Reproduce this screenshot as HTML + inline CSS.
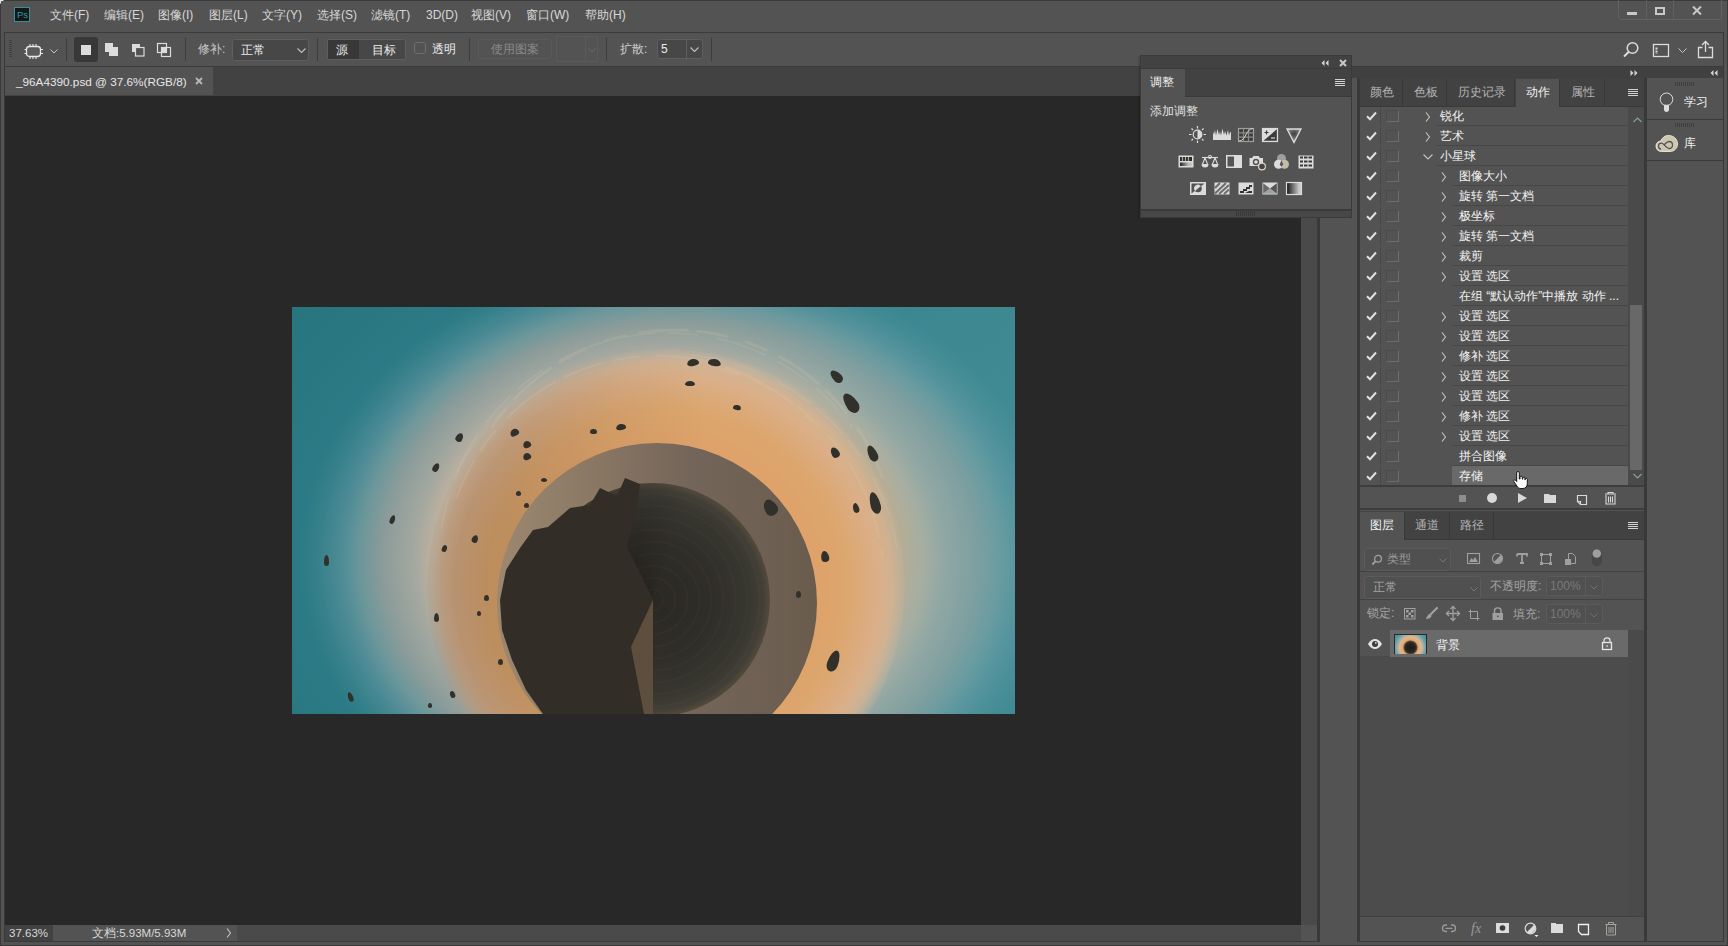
<!DOCTYPE html>
<html><head><meta charset="utf-8">
<style>
*{margin:0;padding:0;box-sizing:border-box}
html,body{width:1728px;height:946px;overflow:hidden;background:#535353;font-family:"Liberation Sans",sans-serif;color:#d8d8d8;font-size:12px}
.a{position:absolute}
.t{position:absolute;white-space:nowrap;line-height:14px}
.ln{position:absolute;background:#393939}
.rk i{position:absolute;display:block;background:#32302b;border-radius:50% 50% 50% 50% / 65% 65% 35% 35%}
</style></head><body>
<!-- window border -->
<div class="a" style="left:0;top:0;width:1728px;height:946px;border:1px solid #3a3a3a"></div>

<!-- MENU BAR -->
<svg class="a" style="left:0;top:0" width="4" height="4"><path d="M0 0H3.5V1H1V3.5H0Z" fill="#e8e8e8"/></svg>
<div class="a" style="left:14px;top:7px;width:16px;height:15px;background:#141816;border:1px solid #3a8e9a"></div>
<div class="t" style="left:17px;top:8px;font-size:9.5px;color:#3796a6;letter-spacing:0px">Ps</div>
<div class="t" style="left:50px;top:8px">文件(F)</div>
<div class="t" style="left:104px;top:8px">编辑(E)</div>
<div class="t" style="left:158px;top:8px">图像(I)</div>
<div class="t" style="left:209px;top:8px">图层(L)</div>
<div class="t" style="left:262px;top:8px">文字(Y)</div>
<div class="t" style="left:317px;top:8px">选择(S)</div>
<div class="t" style="left:371px;top:8px">滤镜(T)</div>
<div class="t" style="left:426px;top:8px">3D(D)</div>
<div class="t" style="left:471px;top:8px">视图(V)</div>
<div class="t" style="left:526px;top:8px">窗口(W)</div>
<div class="t" style="left:585px;top:8px">帮助(H)</div>

<!-- window controls -->
<div class="a" style="left:1618px;top:-3px;width:104px;height:23px;border:1px solid #616161;border-radius:3px"></div>
<div class="ln" style="left:1646px;top:0;width:1px;height:19px;background:#5f5f5f"></div>
<div class="ln" style="left:1673px;top:0;width:1px;height:19px;background:#5f5f5f"></div>
<div class="a" style="left:1627px;top:12px;width:10px;height:3px;background:#c8c8c8"></div>
<div class="a" style="left:1655px;top:7px;width:10px;height:8px;border:2px solid #c8c8c8"></div>
<svg class="a" style="left:1692px;top:6px" width="10" height="9" viewBox="0 0 10 9"><path d="M1 0.5L9 8.5M9 0.5L1 8.5" stroke="#c8c8c8" stroke-width="2"/></svg>

<!-- OPTIONS BAR -->
<div class="a" style="left:4px;top:32px;width:1720px;height:35px;border-top:1px solid #3b3b3b;border-left:1px solid #3b3b3b;border-right:1px solid #3b3b3b;border-bottom:1px solid #3b3b3b"></div>

<!-- options bar contents -->
<div class="a" style="left:9px;top:40px;width:3px;height:18px;background:repeating-linear-gradient(180deg,#404040 0 1px,transparent 1px 2px)"></div>
<svg class="a" style="left:24px;top:43px" width="20" height="17" viewBox="0 0 20 17"><rect x="2.5" y="3.5" width="14" height="10" rx="3" fill="#5a5a5a" stroke="#e8e8e8" stroke-width="1.3"/><path d="M6 1V4M9 1V4M12 1V4M6 13V16M9 13V16M12 13V16M0.5 6.5H3M0.5 10.5H3M16 6.5H19M16 10.5H19" stroke="#e8e8e8" stroke-width="1.1"/></svg>
<svg class="a" style="left:50px;top:49px" width="8" height="5"><path d="M0.5 0.5L4 4L7.5 0.5" stroke="#c8c4b8" stroke-width="1" fill="none"/></svg>
<div class="ln" style="left:66px;top:38px;width:1px;height:23px;background:#3d3d3d"></div>
<div class="a" style="left:74px;top:37px;width:24px;height:25px;background:#383838;border-radius:3px"></div>
<div class="a" style="left:81px;top:45px;width:10px;height:10px;background:#dcdcdc"></div>
<svg class="a" style="left:104px;top:42px" width="16" height="16"><path d="M1 1H9V5H14V14H5V10H1Z" fill="#dcdcdc"/></svg>
<svg class="a" style="left:131px;top:43px" width="15" height="15"><rect x="1" y="1" width="8" height="8" fill="#dcdcdc"/><rect x="4.5" y="4.5" width="8.5" height="8.5" fill="#535353" stroke="#dcdcdc" stroke-width="1.2"/></svg>
<svg class="a" style="left:156px;top:42px" width="16" height="16"><rect x="1.5" y="1.5" width="9" height="9" fill="none" stroke="#dcdcdc" stroke-width="1.2"/><rect x="5.5" y="5.5" width="9" height="9" fill="none" stroke="#dcdcdc" stroke-width="1.2"/><rect x="5.5" y="5.5" width="5" height="5" fill="#dcdcdc"/></svg>
<div class="ln" style="left:185px;top:38px;width:1px;height:23px;background:#3d3d3d"></div>
<div class="t" style="left:198px;top:42px;color:#c8c8c8">修补:</div>
<div class="a" style="left:232px;top:39px;width:77px;height:22px;background:#474747;border:1px solid #5e5e5e;border-radius:3px"></div>
<div class="t" style="left:241px;top:43px;color:#ececec">正常</div>
<svg class="a" style="left:297px;top:48px" width="9" height="6"><path d="M0.5 0.5L4.5 4.5L8.5 0.5" stroke="#c0c0c0" stroke-width="1.1" fill="none"/></svg>
<div class="ln" style="left:317px;top:38px;width:1px;height:23px;background:#3d3d3d"></div>
<div class="a" style="left:327px;top:39px;width:79px;height:21px;background:#474747;border:1px solid #5e5e5e;border-radius:2px"></div>
<div class="a" style="left:328px;top:40px;width:31px;height:19px;background:#383838"></div>
<div class="t" style="left:336px;top:43px;color:#ececec">源</div>
<div class="t" style="left:372px;top:43px;color:#ececec">目标</div>
<div class="a" style="left:414px;top:42px;width:12px;height:12px;border:1px solid #6b6f6f;border-radius:3px"></div>
<div class="t" style="left:432px;top:42px;color:#ececec">透明</div>
<div class="ln" style="left:469px;top:38px;width:1px;height:23px;background:#3d3d3d"></div>
<div class="a" style="left:478px;top:39px;width:74px;height:20px;border:1px solid #5a5a5a;border-radius:3px"></div>
<div class="t" style="left:491px;top:42px;color:#8a8a8a">使用图案</div>
<div class="a" style="left:556px;top:36px;width:42px;height:26px;border:1px solid #5a5a5a;background:#535353"></div>
<div class="ln" style="left:585px;top:37px;width:1px;height:24px;background:#5a5a5a"></div>
<svg class="a" style="left:588px;top:48px" width="8" height="5"><path d="M0.5 0.5L4 4L7.5 0.5" stroke="#6a6a6a" stroke-width="1" fill="none"/></svg>
<div class="ln" style="left:606px;top:38px;width:1px;height:23px;background:#3d3d3d"></div>
<div class="t" style="left:620px;top:42px;color:#d0d0d0">扩散:</div>
<div class="a" style="left:657px;top:39px;width:46px;height:20px;background:#474747;border:1px solid #5e5e5e;border-radius:3px"></div>
<div class="ln" style="left:686px;top:40px;width:1px;height:18px;background:#5e5e5e"></div>
<div class="t" style="left:661px;top:42px;color:#ececec">5</div>
<svg class="a" style="left:690px;top:47px" width="9" height="6"><path d="M0.5 0.5L4.5 4.5L8.5 0.5" stroke="#c0c0c0" stroke-width="1.1" fill="none"/></svg>
<div class="ln" style="left:711px;top:38px;width:1px;height:23px;background:#3d3d3d"></div>
<!-- right icons -->
<svg class="a" style="left:1622px;top:41px" width="18" height="18"><circle cx="10.5" cy="7" r="5.3" fill="none" stroke="#dcdcdc" stroke-width="1.5"/><path d="M6.8 10.8L2 15.5" stroke="#dcdcdc" stroke-width="2"/></svg>
<svg class="a" style="left:1652px;top:43px" width="18" height="16"><rect x="1.5" y="1.5" width="15" height="12" fill="none" stroke="#dcdcdc" stroke-width="1.3"/><path d="M4.5 4.5V11" stroke="#dcdcdc" stroke-width="2" stroke-dasharray="2 1"/></svg>
<svg class="a" style="left:1678px;top:48px" width="9" height="6"><path d="M0.5 0.5L4.5 4.5L8.5 0.5" stroke="#c8c4b8" stroke-width="1" fill="none"/></svg>
<svg class="a" style="left:1697px;top:40px" width="18" height="19"><path d="M5.5 7.5H1.5V17.5H15.5V7.5H11.5M8.5 12V1.5M5 5L8.5 1.5L12 5" fill="none" stroke="#dcdcdc" stroke-width="1.3"/></svg>

<!-- DOC TAB BAR -->
<div class="a" style="left:5px;top:67px;width:1296px;height:29px;background:#424242"></div>
<div class="a" style="left:5px;top:67px;width:208px;height:28px;background:#535353"></div>
<div class="t" style="left:16px;top:75px;font-size:11.75px;color:#e6e6e6">_96A4390.psd @ 37.6%(RGB/8)</div>
<svg class="a" style="left:195px;top:77px" width="8" height="8"><path d="M1 1L7 7M7 1L1 7" stroke="#b8b8b0" stroke-width="1.8"/></svg>

<!-- CANVAS -->
<div class="a" style="left:5px;top:96px;width:1296px;height:829px;background:#282828"></div>
<div id="photo" class="a" style="left:292px;top:307px;width:723px;height:407px;overflow:hidden;background:#27757d">
<div class="a" style="left:0;top:0;width:723px;height:407px;background:radial-gradient(380px 305px at 388px 253px,#e0a46c 0%,#e0a46c 45%,#daa874 52%,#d8b08a 58%,#c2b29e 64%,#a4a8a0 70%,#8c9c9a 78%,#6c979b 84%,#4f8c96 89%,#37818b 95%,#2b7a85 100%,#27757d 130%)"></div>
<div class="a" style="left:0;top:0;width:723px;height:407px;background:linear-gradient(90deg,rgba(100,165,172,0) 380px,rgba(100,165,172,0.25) 560px,rgba(100,165,172,0.38) 723px)"></div>
<div class="a" style="left:135px;top:42px;width:478px;height:478px;border-radius:50%;background:linear-gradient(90deg,#d2d2d2 0px,#dcdcdc 80px,#f4f4f4 200px,#ffffff 280px),radial-gradient(circle at 50% 50%,#dea26a 0px,#dea26a 150px,#dca66e 180px,#dbae86 210px,#d8b492 228px,#ccb8a2 239px);background-blend-mode:multiply;-webkit-mask-image:radial-gradient(circle at 50% 50%,#000 212px,rgba(0,0,0,0.75) 226px,rgba(0,0,0,0.3) 236px,transparent 243px)"></div>
<svg class="a" style="left:0;top:0;opacity:0.14" width="723" height="407"><g fill="none" stroke="#f0d2ae" stroke-linecap="round">
<path d="M165 190A213 213 0 0 1 520 115" stroke-width="2" stroke-dasharray="40 12 25 18 60 10"/>
<path d="M150 220A228 228 0 0 1 560 120" stroke-width="1.5" stroke-dasharray="30 20 50 15 35 12"/>
<path d="M200 120A220 220 0 0 1 590 170" stroke-width="2.5" stroke-dasharray="22 14 48 10 30 20"/>
<path d="M400 48A234 234 0 0 1 605 240" stroke-width="1.5" stroke-dasharray="35 10 20 25 40 8"/>
<path d="M430 62A220 220 0 0 1 590 250" stroke-width="2" stroke-dasharray="18 16 40 12 28 14"/>
</g></svg>
<div class="a" style="left:205px;top:136px;width:320px;height:320px;border-radius:50%;background:linear-gradient(90deg,#9c8870 0%,#8a7864 30%,#74655a 60%,#6a5c4d 100%)"></div>
<div class="a" style="left:244px;top:176px;width:234px;height:234px;border-radius:50%;background:radial-gradient(circle at 50% 50%,#2a2823 0px,#302e28 60px,#37362f 95px,#413f37 110px,#554a3b 117px)"></div>
<div class="a" style="left:244px;top:176px;width:234px;height:234px;border-radius:50%;background:repeating-radial-gradient(circle at 50% 50%,rgba(150,110,70,0) 0px,rgba(150,110,70,0) 9px,rgba(160,120,80,0.06) 10px,rgba(150,110,70,0) 12px)"></div>
<div class="a" style="left:244px;top:176px;width:234px;height:234px;border-radius:50%;background:conic-gradient(from 180deg at 50% 50%,rgba(20,18,15,0.25) 0deg,rgba(20,18,15,0.3) 150deg,rgba(20,18,15,0) 200deg,rgba(20,18,15,0) 360deg)"></div>
<svg class="a" style="left:0;top:0" width="723" height="407"><path d="M348 177L333 171L325 189L308 181L298 198L278 201L256 220L241 223L228 241L214 263L208 293L210 323L220 353L234 383L251 407L361 407L361 292L335 240L345 200Z" fill="#322e27"/><path d="M361 293L339 340L352 407L361 407Z" fill="#6e5a45" opacity="0.75"/></svg>
<div class="rk">
<i style="left:395px;top:52px;width:12px;height:7px;transform:rotate(-10deg)"></i>
<i style="left:416px;top:52px;width:13px;height:7px;transform:rotate(10deg)"></i>
<i style="left:393px;top:74px;width:10px;height:5px;transform:rotate(0deg)"></i>
<i style="left:441px;top:98px;width:8px;height:5px;transform:rotate(10deg)"></i>
<i style="left:324px;top:117px;width:10px;height:6px;transform:rotate(-10deg)"></i>
<i style="left:218px;top:122px;width:9px;height:7px;transform:rotate(-30deg)"></i>
<i style="left:298px;top:122px;width:7px;height:5px;transform:rotate(0deg)"></i>
<i style="left:164px;top:126px;width:7px;height:9px;transform:rotate(30deg)"></i>
<i style="left:231px;top:134px;width:8px;height:7px;transform:rotate(-20deg)"></i>
<i style="left:231px;top:146px;width:8px;height:7px;transform:rotate(-20deg)"></i>
<i style="left:141px;top:156px;width:6px;height:9px;transform:rotate(30deg)"></i>
<i style="left:249px;top:171px;width:6px;height:4px;transform:rotate(0deg)"></i>
<i style="left:224px;top:184px;width:5px;height:5px;transform:rotate(0deg)"></i>
<i style="left:232px;top:196px;width:5px;height:5px;transform:rotate(0deg)"></i>
<i style="left:98px;top:208px;width:5px;height:9px;transform:rotate(20deg)"></i>
<i style="left:180px;top:228px;width:6px;height:8px;transform:rotate(20deg)"></i>
<i style="left:150px;top:238px;width:5px;height:7px;transform:rotate(20deg)"></i>
<i style="left:32px;top:248px;width:5px;height:11px;transform:rotate(0deg)"></i>
<i style="left:192px;top:288px;width:5px;height:6px;transform:rotate(0deg)"></i>
<i style="left:142px;top:306px;width:5px;height:9px;transform:rotate(0deg)"></i>
<i style="left:185px;top:304px;width:4px;height:5px;transform:rotate(0deg)"></i>
<i style="left:212px;top:326px;width:4px;height:5px;transform:rotate(0deg)"></i>
<i style="left:206px;top:352px;width:5px;height:6px;transform:rotate(0deg)"></i>
<i style="left:158px;top:384px;width:5px;height:7px;transform:rotate(-20deg)"></i>
<i style="left:136px;top:396px;width:4px;height:5px;transform:rotate(0deg)"></i>
<i style="left:56px;top:385px;width:5px;height:10px;transform:rotate(-20deg)"></i>
<i style="left:540px;top:62px;width:9px;height:15px;transform:rotate(-45deg)"></i>
<i style="left:553px;top:85px;width:12px;height:22px;transform:rotate(-35deg)"></i>
<i style="left:539px;top:140px;width:8px;height:11px;transform:rotate(-30deg)"></i>
<i style="left:576px;top:138px;width:9px;height:17px;transform:rotate(-25deg)"></i>
<i style="left:561px;top:196px;width:6px;height:10px;transform:rotate(-15deg)"></i>
<i style="left:578px;top:185px;width:10px;height:22px;transform:rotate(-15deg)"></i>
<i style="left:472px;top:192px;width:13px;height:17px;transform:rotate(-30deg)"></i>
<i style="left:529px;top:244px;width:8px;height:11px;transform:rotate(-10deg)"></i>
<i style="left:536px;top:343px;width:11px;height:22px;transform:rotate(20deg)"></i>
<i style="left:504px;top:284px;width:5px;height:7px;transform:rotate(0deg)"></i>
</div>
</div>

<!-- vertical scrollbar -->
<div class="a" style="left:1301px;top:96px;width:16px;height:829px;background:#4a4a4a"></div>
<!-- status bar -->
<div class="a" style="left:5px;top:925px;width:48px;height:16px;background:#424242"></div>
<div class="a" style="left:53px;top:925px;width:184px;height:16px;background:#535353"></div>
<div class="a" style="left:237px;top:925px;width:1064px;height:16px;background:#4a4a4a"></div>
<div class="t" style="left:9px;top:926px;font-size:11.5px">37.63%</div>
<div class="t" style="left:92px;top:926px;font-size:11.5px">文档:5.93M/5.93M</div>
<svg class="a" style="left:226px;top:928px" width="6" height="10"><path d="M1 0.5L4.5 5L1 9.5" stroke="#c8c6bc" stroke-width="1.1" fill="none"/></svg>
<div class="ln" style="left:4px;top:66px;width:1px;height:876px"></div>
<div class="ln" style="left:4px;top:941px;width:1316px;height:1px"></div>

<!-- dock separators -->
<div class="ln" style="left:1317px;top:66px;width:3px;height:876px"></div>
<div class="a" style="left:1320px;top:67px;width:403px;height:11px;background:#404040"></div>
<div class="ln" style="left:1357px;top:78px;width:3px;height:864px"></div>

<!-- ACTIONS PANEL -->
<div id="actions" class="a" style="left:1360px;top:78px;width:284px;height:432px;background:#535353"></div>
<div class="a" style="left:1360px;top:78px;width:284px;height:28px;background:#424242"></div>
<div class="a" style="left:1360px;top:79px;width:43px;height:27px;background:#424242;border-right:1px solid #383838"></div>
<div class="t" style="left:1360px;top:85px;width:43px;text-align:center;color:#b4b4b4">颜色</div>
<div class="a" style="left:1404px;top:79px;width:43px;height:27px;background:#424242;border-right:1px solid #383838"></div>
<div class="t" style="left:1404px;top:85px;width:43px;text-align:center;color:#b4b4b4">色板</div>
<div class="a" style="left:1448px;top:79px;width:67px;height:27px;background:#424242;border-right:1px solid #383838"></div>
<div class="t" style="left:1448px;top:85px;width:67px;text-align:center;color:#b4b4b4">历史记录</div>
<div class="a" style="left:1516px;top:79px;width:44px;height:28px;background:#535353;border-right:1px solid #383838"></div>
<div class="t" style="left:1516px;top:85px;width:44px;text-align:center;color:#f2f2f2">动作</div>
<div class="a" style="left:1561px;top:79px;width:44px;height:27px;background:#424242;border-right:1px solid #383838"></div>
<div class="t" style="left:1561px;top:85px;width:44px;text-align:center;color:#b4b4b4">属性</div>
<div class="ln" style="left:1360px;top:106px;width:156px;height:1px"></div>
<div class="ln" style="left:1560px;top:106px;width:84px;height:1px"></div>
<svg class="a" style="left:1628px;top:89px" width="11" height="8"><path d="M0 0H10V1H0ZM0 2H10V3H0ZM0 4H10V5H0ZM0 6H10V7H0Z" fill="#d2d2d2"/></svg>
<div class="a" style="left:1628px;top:107px;width:16px;height:379px;background:#4a4a4a"></div>
<svg class="a" style="left:1633px;top:117px" width="9" height="6"><path d="M0.5 5L4.5 1L8.5 5" stroke="#8a9c9c" stroke-width="1.2" fill="none"/></svg>
<div class="a" style="left:1630px;top:305px;width:12px;height:165px;background:#686868"></div>
<svg class="a" style="left:1633px;top:473px" width="9" height="6"><path d="M0.5 1L4.5 5L8.5 1" stroke="#8a9c9c" stroke-width="1.2" fill="none"/></svg>
<svg class="a" style="left:1366px;top:111px" width="11" height="10"><path d="M1 5.2L4 8.2L10 1.5" stroke="#e2e0d8" stroke-width="2" fill="none"/></svg>
<div class="a" style="left:1380px;top:107px;width:1px;height:18px;background:#484848"></div>
<div class="a" style="left:1386px;top:110px;width:13px;height:12px;border-right:1px solid #6c6c6c;border-bottom:1px solid #6c6c6c;border-top:1px solid #4b4b4b;border-left:1px solid #4b4b4b"></div>
<svg class="a" style="left:1425px;top:112px" width="6" height="10"><path d="M1 0.5L4.5 5L1 9.5" stroke="#c8c6bc" stroke-width="1.1" fill="none"/></svg>
<div class="t" style="left:1440px;top:109px;color:#f4f4f4">锐化</div>
<div class="a" style="left:1436px;top:125px;width:192px;height:1px;background:#474747"></div>
<svg class="a" style="left:1366px;top:131px" width="11" height="10"><path d="M1 5.2L4 8.2L10 1.5" stroke="#e2e0d8" stroke-width="2" fill="none"/></svg>
<div class="a" style="left:1380px;top:127px;width:1px;height:18px;background:#484848"></div>
<div class="a" style="left:1386px;top:130px;width:13px;height:12px;border-right:1px solid #6c6c6c;border-bottom:1px solid #6c6c6c;border-top:1px solid #4b4b4b;border-left:1px solid #4b4b4b"></div>
<svg class="a" style="left:1425px;top:132px" width="6" height="10"><path d="M1 0.5L4.5 5L1 9.5" stroke="#c8c6bc" stroke-width="1.1" fill="none"/></svg>
<div class="t" style="left:1440px;top:129px;color:#f4f4f4">艺术</div>
<div class="a" style="left:1436px;top:145px;width:192px;height:1px;background:#474747"></div>
<svg class="a" style="left:1366px;top:151px" width="11" height="10"><path d="M1 5.2L4 8.2L10 1.5" stroke="#e2e0d8" stroke-width="2" fill="none"/></svg>
<div class="a" style="left:1380px;top:147px;width:1px;height:18px;background:#484848"></div>
<div class="a" style="left:1386px;top:150px;width:13px;height:12px;border-right:1px solid #6c6c6c;border-bottom:1px solid #6c6c6c;border-top:1px solid #4b4b4b;border-left:1px solid #4b4b4b"></div>
<svg class="a" style="left:1423px;top:154px" width="10" height="6"><path d="M0.5 0.5L5 5L9.5 0.5" stroke="#c8c6bc" stroke-width="1.1" fill="none"/></svg>
<div class="t" style="left:1440px;top:149px;color:#f4f4f4">小星球</div>
<div class="a" style="left:1436px;top:165px;width:192px;height:1px;background:#474747"></div>
<svg class="a" style="left:1366px;top:171px" width="11" height="10"><path d="M1 5.2L4 8.2L10 1.5" stroke="#e2e0d8" stroke-width="2" fill="none"/></svg>
<div class="a" style="left:1380px;top:167px;width:1px;height:18px;background:#484848"></div>
<div class="a" style="left:1386px;top:170px;width:13px;height:12px;border-right:1px solid #6c6c6c;border-bottom:1px solid #6c6c6c;border-top:1px solid #4b4b4b;border-left:1px solid #4b4b4b"></div>
<svg class="a" style="left:1441px;top:172px" width="6" height="10"><path d="M1 0.5L4.5 5L1 9.5" stroke="#c8c6bc" stroke-width="1.1" fill="none"/></svg>
<div class="t" style="left:1459px;top:169px;color:#f4f4f4">图像大小</div>
<div class="a" style="left:1452px;top:185px;width:176px;height:1px;background:#474747"></div>
<svg class="a" style="left:1366px;top:191px" width="11" height="10"><path d="M1 5.2L4 8.2L10 1.5" stroke="#e2e0d8" stroke-width="2" fill="none"/></svg>
<div class="a" style="left:1380px;top:187px;width:1px;height:18px;background:#484848"></div>
<div class="a" style="left:1386px;top:190px;width:13px;height:12px;border-right:1px solid #6c6c6c;border-bottom:1px solid #6c6c6c;border-top:1px solid #4b4b4b;border-left:1px solid #4b4b4b"></div>
<svg class="a" style="left:1441px;top:192px" width="6" height="10"><path d="M1 0.5L4.5 5L1 9.5" stroke="#c8c6bc" stroke-width="1.1" fill="none"/></svg>
<div class="t" style="left:1459px;top:189px;color:#f4f4f4">旋转 第一文档</div>
<div class="a" style="left:1452px;top:205px;width:176px;height:1px;background:#474747"></div>
<svg class="a" style="left:1366px;top:211px" width="11" height="10"><path d="M1 5.2L4 8.2L10 1.5" stroke="#e2e0d8" stroke-width="2" fill="none"/></svg>
<div class="a" style="left:1380px;top:207px;width:1px;height:18px;background:#484848"></div>
<div class="a" style="left:1386px;top:210px;width:13px;height:12px;border-right:1px solid #6c6c6c;border-bottom:1px solid #6c6c6c;border-top:1px solid #4b4b4b;border-left:1px solid #4b4b4b"></div>
<svg class="a" style="left:1441px;top:212px" width="6" height="10"><path d="M1 0.5L4.5 5L1 9.5" stroke="#c8c6bc" stroke-width="1.1" fill="none"/></svg>
<div class="t" style="left:1459px;top:209px;color:#f4f4f4">极坐标</div>
<div class="a" style="left:1452px;top:225px;width:176px;height:1px;background:#474747"></div>
<svg class="a" style="left:1366px;top:231px" width="11" height="10"><path d="M1 5.2L4 8.2L10 1.5" stroke="#e2e0d8" stroke-width="2" fill="none"/></svg>
<div class="a" style="left:1380px;top:227px;width:1px;height:18px;background:#484848"></div>
<div class="a" style="left:1386px;top:230px;width:13px;height:12px;border-right:1px solid #6c6c6c;border-bottom:1px solid #6c6c6c;border-top:1px solid #4b4b4b;border-left:1px solid #4b4b4b"></div>
<svg class="a" style="left:1441px;top:232px" width="6" height="10"><path d="M1 0.5L4.5 5L1 9.5" stroke="#c8c6bc" stroke-width="1.1" fill="none"/></svg>
<div class="t" style="left:1459px;top:229px;color:#f4f4f4">旋转 第一文档</div>
<div class="a" style="left:1452px;top:245px;width:176px;height:1px;background:#474747"></div>
<svg class="a" style="left:1366px;top:251px" width="11" height="10"><path d="M1 5.2L4 8.2L10 1.5" stroke="#e2e0d8" stroke-width="2" fill="none"/></svg>
<div class="a" style="left:1380px;top:247px;width:1px;height:18px;background:#484848"></div>
<div class="a" style="left:1386px;top:250px;width:13px;height:12px;border-right:1px solid #6c6c6c;border-bottom:1px solid #6c6c6c;border-top:1px solid #4b4b4b;border-left:1px solid #4b4b4b"></div>
<svg class="a" style="left:1441px;top:252px" width="6" height="10"><path d="M1 0.5L4.5 5L1 9.5" stroke="#c8c6bc" stroke-width="1.1" fill="none"/></svg>
<div class="t" style="left:1459px;top:249px;color:#f4f4f4">裁剪</div>
<div class="a" style="left:1452px;top:265px;width:176px;height:1px;background:#474747"></div>
<svg class="a" style="left:1366px;top:271px" width="11" height="10"><path d="M1 5.2L4 8.2L10 1.5" stroke="#e2e0d8" stroke-width="2" fill="none"/></svg>
<div class="a" style="left:1380px;top:267px;width:1px;height:18px;background:#484848"></div>
<div class="a" style="left:1386px;top:270px;width:13px;height:12px;border-right:1px solid #6c6c6c;border-bottom:1px solid #6c6c6c;border-top:1px solid #4b4b4b;border-left:1px solid #4b4b4b"></div>
<svg class="a" style="left:1441px;top:272px" width="6" height="10"><path d="M1 0.5L4.5 5L1 9.5" stroke="#c8c6bc" stroke-width="1.1" fill="none"/></svg>
<div class="t" style="left:1459px;top:269px;color:#f4f4f4">设置 选区</div>
<div class="a" style="left:1452px;top:285px;width:176px;height:1px;background:#474747"></div>
<svg class="a" style="left:1366px;top:291px" width="11" height="10"><path d="M1 5.2L4 8.2L10 1.5" stroke="#e2e0d8" stroke-width="2" fill="none"/></svg>
<div class="a" style="left:1380px;top:287px;width:1px;height:18px;background:#484848"></div>
<div class="a" style="left:1386px;top:290px;width:13px;height:12px;border-right:1px solid #6c6c6c;border-bottom:1px solid #6c6c6c;border-top:1px solid #4b4b4b;border-left:1px solid #4b4b4b"></div>
<div class="t" style="left:1459px;top:289px;color:#f4f4f4">在组 “默认动作”中播放 动作 ...</div>
<div class="a" style="left:1452px;top:305px;width:176px;height:1px;background:#474747"></div>
<svg class="a" style="left:1366px;top:311px" width="11" height="10"><path d="M1 5.2L4 8.2L10 1.5" stroke="#e2e0d8" stroke-width="2" fill="none"/></svg>
<div class="a" style="left:1380px;top:307px;width:1px;height:18px;background:#484848"></div>
<div class="a" style="left:1386px;top:310px;width:13px;height:12px;border-right:1px solid #6c6c6c;border-bottom:1px solid #6c6c6c;border-top:1px solid #4b4b4b;border-left:1px solid #4b4b4b"></div>
<svg class="a" style="left:1441px;top:312px" width="6" height="10"><path d="M1 0.5L4.5 5L1 9.5" stroke="#c8c6bc" stroke-width="1.1" fill="none"/></svg>
<div class="t" style="left:1459px;top:309px;color:#f4f4f4">设置 选区</div>
<div class="a" style="left:1452px;top:325px;width:176px;height:1px;background:#474747"></div>
<svg class="a" style="left:1366px;top:331px" width="11" height="10"><path d="M1 5.2L4 8.2L10 1.5" stroke="#e2e0d8" stroke-width="2" fill="none"/></svg>
<div class="a" style="left:1380px;top:327px;width:1px;height:18px;background:#484848"></div>
<div class="a" style="left:1386px;top:330px;width:13px;height:12px;border-right:1px solid #6c6c6c;border-bottom:1px solid #6c6c6c;border-top:1px solid #4b4b4b;border-left:1px solid #4b4b4b"></div>
<svg class="a" style="left:1441px;top:332px" width="6" height="10"><path d="M1 0.5L4.5 5L1 9.5" stroke="#c8c6bc" stroke-width="1.1" fill="none"/></svg>
<div class="t" style="left:1459px;top:329px;color:#f4f4f4">设置 选区</div>
<div class="a" style="left:1452px;top:345px;width:176px;height:1px;background:#474747"></div>
<svg class="a" style="left:1366px;top:351px" width="11" height="10"><path d="M1 5.2L4 8.2L10 1.5" stroke="#e2e0d8" stroke-width="2" fill="none"/></svg>
<div class="a" style="left:1380px;top:347px;width:1px;height:18px;background:#484848"></div>
<div class="a" style="left:1386px;top:350px;width:13px;height:12px;border-right:1px solid #6c6c6c;border-bottom:1px solid #6c6c6c;border-top:1px solid #4b4b4b;border-left:1px solid #4b4b4b"></div>
<svg class="a" style="left:1441px;top:352px" width="6" height="10"><path d="M1 0.5L4.5 5L1 9.5" stroke="#c8c6bc" stroke-width="1.1" fill="none"/></svg>
<div class="t" style="left:1459px;top:349px;color:#f4f4f4">修补 选区</div>
<div class="a" style="left:1452px;top:365px;width:176px;height:1px;background:#474747"></div>
<svg class="a" style="left:1366px;top:371px" width="11" height="10"><path d="M1 5.2L4 8.2L10 1.5" stroke="#e2e0d8" stroke-width="2" fill="none"/></svg>
<div class="a" style="left:1380px;top:367px;width:1px;height:18px;background:#484848"></div>
<div class="a" style="left:1386px;top:370px;width:13px;height:12px;border-right:1px solid #6c6c6c;border-bottom:1px solid #6c6c6c;border-top:1px solid #4b4b4b;border-left:1px solid #4b4b4b"></div>
<svg class="a" style="left:1441px;top:372px" width="6" height="10"><path d="M1 0.5L4.5 5L1 9.5" stroke="#c8c6bc" stroke-width="1.1" fill="none"/></svg>
<div class="t" style="left:1459px;top:369px;color:#f4f4f4">设置 选区</div>
<div class="a" style="left:1452px;top:385px;width:176px;height:1px;background:#474747"></div>
<svg class="a" style="left:1366px;top:391px" width="11" height="10"><path d="M1 5.2L4 8.2L10 1.5" stroke="#e2e0d8" stroke-width="2" fill="none"/></svg>
<div class="a" style="left:1380px;top:387px;width:1px;height:18px;background:#484848"></div>
<div class="a" style="left:1386px;top:390px;width:13px;height:12px;border-right:1px solid #6c6c6c;border-bottom:1px solid #6c6c6c;border-top:1px solid #4b4b4b;border-left:1px solid #4b4b4b"></div>
<svg class="a" style="left:1441px;top:392px" width="6" height="10"><path d="M1 0.5L4.5 5L1 9.5" stroke="#c8c6bc" stroke-width="1.1" fill="none"/></svg>
<div class="t" style="left:1459px;top:389px;color:#f4f4f4">设置 选区</div>
<div class="a" style="left:1452px;top:405px;width:176px;height:1px;background:#474747"></div>
<svg class="a" style="left:1366px;top:411px" width="11" height="10"><path d="M1 5.2L4 8.2L10 1.5" stroke="#e2e0d8" stroke-width="2" fill="none"/></svg>
<div class="a" style="left:1380px;top:407px;width:1px;height:18px;background:#484848"></div>
<div class="a" style="left:1386px;top:410px;width:13px;height:12px;border-right:1px solid #6c6c6c;border-bottom:1px solid #6c6c6c;border-top:1px solid #4b4b4b;border-left:1px solid #4b4b4b"></div>
<svg class="a" style="left:1441px;top:412px" width="6" height="10"><path d="M1 0.5L4.5 5L1 9.5" stroke="#c8c6bc" stroke-width="1.1" fill="none"/></svg>
<div class="t" style="left:1459px;top:409px;color:#f4f4f4">修补 选区</div>
<div class="a" style="left:1452px;top:425px;width:176px;height:1px;background:#474747"></div>
<svg class="a" style="left:1366px;top:431px" width="11" height="10"><path d="M1 5.2L4 8.2L10 1.5" stroke="#e2e0d8" stroke-width="2" fill="none"/></svg>
<div class="a" style="left:1380px;top:427px;width:1px;height:18px;background:#484848"></div>
<div class="a" style="left:1386px;top:430px;width:13px;height:12px;border-right:1px solid #6c6c6c;border-bottom:1px solid #6c6c6c;border-top:1px solid #4b4b4b;border-left:1px solid #4b4b4b"></div>
<svg class="a" style="left:1441px;top:432px" width="6" height="10"><path d="M1 0.5L4.5 5L1 9.5" stroke="#c8c6bc" stroke-width="1.1" fill="none"/></svg>
<div class="t" style="left:1459px;top:429px;color:#f4f4f4">设置 选区</div>
<div class="a" style="left:1452px;top:445px;width:176px;height:1px;background:#474747"></div>
<svg class="a" style="left:1366px;top:451px" width="11" height="10"><path d="M1 5.2L4 8.2L10 1.5" stroke="#e2e0d8" stroke-width="2" fill="none"/></svg>
<div class="a" style="left:1380px;top:447px;width:1px;height:18px;background:#484848"></div>
<div class="a" style="left:1386px;top:450px;width:13px;height:12px;border-right:1px solid #6c6c6c;border-bottom:1px solid #6c6c6c;border-top:1px solid #4b4b4b;border-left:1px solid #4b4b4b"></div>
<div class="t" style="left:1459px;top:449px;color:#f4f4f4">拼合图像</div>
<div class="a" style="left:1452px;top:465px;width:176px;height:1px;background:#474747"></div>
<svg class="a" style="left:1366px;top:471px" width="11" height="10"><path d="M1 5.2L4 8.2L10 1.5" stroke="#e2e0d8" stroke-width="2" fill="none"/></svg>
<div class="a" style="left:1380px;top:467px;width:1px;height:18px;background:#484848"></div>
<div class="a" style="left:1386px;top:470px;width:13px;height:12px;border-right:1px solid #6c6c6c;border-bottom:1px solid #6c6c6c;border-top:1px solid #4b4b4b;border-left:1px solid #4b4b4b"></div>
<div class="a" style="left:1452px;top:466px;width:176px;height:19px;background:#696969"></div>
<div class="t" style="left:1459px;top:469px;color:#f4f4f4">存储</div>
<div class="a" style="left:1360px;top:485px;width:284px;height:2px;background:#3d3d3d"></div>
<div class="a" style="left:1360px;top:508px;width:284px;height:3px;background:#3d3d3d"></div>
<svg class="a" style="left:1455px;top:490px" width="165" height="16" viewBox="0 0 165 16">
<rect x="4" y="5" width="7" height="7" fill="#8e8e8e"/>
<circle cx="37" cy="8" r="5" fill="#d8d8d8"/>
<path d="M63 3L72 8L63 13Z" fill="#d8d8d8"/>
<path d="M89 4H94L95 5H101V13H89Z" fill="#d8d8d8"/>
<path d="M122.5 5.5H131.5V14.5H125.5L122.5 11.5Z" fill="none" stroke="#d8d8d8" stroke-width="1.2"/><path d="M122.5 11.5H125.5V14.5" fill="none" stroke="#d8d8d8" stroke-width="1.2"/>
<path d="M150 4H161M153 4V2.5H158V4M151 5V14H160V5M153.5 6.5V12.5M155.5 6.5V12.5M157.5 6.5V12.5" fill="none" stroke="#d8d8d8" stroke-width="1.1"/>
</svg>
<svg class="a" style="left:1512px;top:470px" width="18" height="20" viewBox="0 0 18 20"><path d="M6 1.5C6.8 1.5 7.3 2 7.3 2.8V9L8 9V7.3C8 6.6 8.6 6.2 9.2 6.2C9.8 6.2 10.3 6.6 10.3 7.3V9.2L10.7 9.2V8.2C10.7 7.6 11.2 7.2 11.8 7.2C12.4 7.2 12.9 7.6 12.9 8.2V9.8L13.2 9.8V9.2C13.2 8.7 13.7 8.3 14.2 8.3C14.8 8.3 15.3 8.7 15.3 9.3V13.5C15.3 16.5 13.6 18.5 10.8 18.5H8.8C7 18.5 6 17.6 5 16.2L1.8 11.6C1.4 11 1.6 10.3 2.2 10C2.7 9.7 3.4 9.9 3.8 10.4L4.7 11.6V2.8C4.7 2 5.2 1.5 6 1.5Z" fill="#fff" stroke="#111" stroke-width="1"/></svg>

<!-- LAYERS PANEL -->
<div id="layers" class="a" style="left:1360px;top:510px;width:284px;height:431px;background:#535353"></div>
<!-- LAYERS tab bar -->
<div class="a" style="left:1360px;top:511px;width:284px;height:29px;background:#424242"></div>
<div class="a" style="left:1360px;top:512px;width:44px;height:28px;background:#535353"></div>
<div class="a" style="left:1404px;top:512px;width:1px;height:28px;background:#383838"></div>
<div class="a" style="left:1449px;top:512px;width:1px;height:28px;background:#383838"></div>
<div class="a" style="left:1493px;top:512px;width:1px;height:28px;background:#383838"></div>
<div class="t" style="left:1370px;top:518px;color:#f2f2f2">图层</div>
<div class="t" style="left:1415px;top:518px;color:#b4b4b4">通道</div>
<div class="t" style="left:1460px;top:518px;color:#b4b4b4">路径</div>
<svg class="a" style="left:1628px;top:522px" width="11" height="8"><path d="M0 0H10V1H0ZM0 2H10V3H0ZM0 4H10V5H0ZM0 6H10V7H0Z" fill="#d2d2d2"/></svg>
<div class="ln" style="left:1404px;top:539px;width:240px;height:1px"></div>
<!-- filter row -->
<div class="a" style="left:1364px;top:548px;width:87px;height:23px;border:1px solid #5b5b5b;border-radius:3px;background:#505050"></div>
<svg class="a" style="left:1371px;top:554px" width="12" height="12"><circle cx="7" cy="4.8" r="3.4" fill="none" stroke="#a0a0a0" stroke-width="1.3"/><path d="M4.5 7.3L1.3 10.5" stroke="#a0a0a0" stroke-width="1.8"/></svg>
<div class="t" style="left:1387px;top:552px;color:#9c9c9c">类型</div>
<svg class="a" style="left:1439px;top:558px" width="8" height="5"><path d="M0.5 0.5L4 4L7.5 0.5" stroke="#777" stroke-width="1" fill="none"/></svg>
<svg class="a" style="left:1466px;top:546px" width="140" height="22" viewBox="1466 546 140 22">
<rect x="1467.5" y="553.5" width="12" height="10" fill="none" stroke="#9f9f9f" stroke-width="1.1"/>
<path d="M1469 562L1471.5 558L1473 560L1475 557L1478 562Z" fill="#9f9f9f"/>
<circle cx="1497.5" cy="558.5" r="5" fill="none" stroke="#9f9f9f" stroke-width="1.1"/>
<path d="M1500.9 554.8A5 5 0 0 1 1494 562Z" fill="#9f9f9f"/>
<path d="M1517 554H1527V556.5M1517 554V556.5M1522 554V563M1520 563H1524" stroke="#9f9f9f" stroke-width="1.8" fill="none"/>
<rect x="1541.5" y="554.5" width="9" height="9" fill="none" stroke="#9f9f9f" stroke-width="1"/>
<rect x="1540" y="553" width="3" height="3" fill="#9f9f9f"/><rect x="1549" y="553" width="3" height="3" fill="#9f9f9f"/><rect x="1540" y="562" width="3" height="3" fill="#9f9f9f"/><rect x="1549" y="562" width="3" height="3" fill="#9f9f9f"/>
<path d="M1568.5 553.5H1572.5L1575.5 556.5V563.5H1568.5Z" fill="none" stroke="#9f9f9f" stroke-width="1"/>
<rect x="1565" y="559" width="6" height="6" fill="#9f9f9f"/>
<rect x="1592" y="549" width="9.5" height="17" rx="4.75" fill="#474747" stroke="#444" stroke-width="0.5"/>
<circle cx="1596.8" cy="553.5" r="4.3" fill="#9c9f9c"/>
</svg>
<div class="ln" style="left:1360px;top:571px;width:284px;height:1px;background:#424242"></div>
<!-- blend row -->
<div class="a" style="left:1364px;top:576px;width:117px;height:23px;border:1px solid #5b5b5b;border-radius:3px;background:#505050"></div>
<div class="t" style="left:1373px;top:580px;color:#a4a4a4">正常</div>
<svg class="a" style="left:1470px;top:587px" width="8" height="5"><path d="M0.5 0.5L4 4L7.5 0.5" stroke="#777" stroke-width="1" fill="none"/></svg>
<div class="t" style="left:1490px;top:579px;color:#a4a4a4">不透明度:</div>
<div class="a" style="left:1546px;top:576px;width:57px;height:20px;border:1px solid #5b5b5b;border-radius:3px;background:#505050"></div>
<div class="a" style="left:1585px;top:577px;width:1px;height:18px;background:#5b5b5b"></div>
<div class="t" style="left:1550px;top:579px;color:#787878">100%</div>
<svg class="a" style="left:1590px;top:585px" width="8" height="5"><path d="M0.5 0.5L4 4L7.5 0.5" stroke="#6f6f6f" stroke-width="1" fill="none"/></svg>
<div class="ln" style="left:1360px;top:599px;width:284px;height:1px;background:#424242"></div>
<!-- lock row -->
<div class="t" style="left:1367px;top:606px;color:#a4a4a4">锁定:</div>
<svg class="a" style="left:1402px;top:604px" width="106" height="18" viewBox="1402 604 106 18">
<rect x="1404.5" y="608.5" width="10.5" height="10.5" fill="none" stroke="#a0a0a0" stroke-width="1"/>
<rect x="1406" y="610" width="2.5" height="2.5" fill="#a0a0a0"/><rect x="1411" y="610" width="2.5" height="2.5" fill="#a0a0a0"/><rect x="1408.5" y="612.5" width="2.5" height="2.5" fill="#a0a0a0"/><rect x="1406" y="615" width="2.5" height="2.5" fill="#a0a0a0"/><rect x="1411" y="615" width="2.5" height="2.5" fill="#a0a0a0"/>
<path d="M1437 608L1430 615" stroke="#a0a0a0" stroke-width="2.2" stroke-linecap="round"/>
<path d="M1430.5 614C1428 614 1427 616 1426 619C1429 619 1431 618 1431.5 616Z" fill="#a0a0a0"/>
<path d="M1453 607V620M1446.5 613.5H1459.5" stroke="#a0a0a0" stroke-width="1.3"/>
<path d="M1450.5 609L1453 606.5L1455.5 609M1450.5 618L1453 620.5L1455.5 618M1449 611L1446.5 613.5L1449 616M1457 611L1459.5 613.5L1457 616" fill="none" stroke="#a0a0a0" stroke-width="1.3"/>
<path d="M1470.5 609.5V618.5H1479.5M1468.5 611.5H1477.5V620.5" fill="none" stroke="#a0a0a0" stroke-width="1"/>
<path d="M1492.5 613H1503V620H1492.5Z" fill="#a0a0a0"/>
<path d="M1494.5 613V610.5C1494.5 607 1501 607 1501 610.5V613" fill="none" stroke="#a0a0a0" stroke-width="1.4"/>
<rect x="1497" y="615.5" width="1.6" height="1.6" fill="#535353"/>
</svg>
<div class="t" style="left:1513px;top:607px;color:#a4a4a4">填充:</div>
<div class="a" style="left:1546px;top:604px;width:57px;height:20px;border:1px solid #5b5b5b;border-radius:3px;background:#505050"></div>
<div class="a" style="left:1585px;top:605px;width:1px;height:18px;background:#5b5b5b"></div>
<div class="t" style="left:1550px;top:607px;color:#787878">100%</div>
<svg class="a" style="left:1590px;top:613px" width="8" height="5"><path d="M0.5 0.5L4 4L7.5 0.5" stroke="#6f6f6f" stroke-width="1" fill="none"/></svg>
<!-- layer list -->
<div class="a" style="left:1360px;top:657px;width:268px;height:259px;background:#4c4c4c"></div>
<div class="a" style="left:1628px;top:630px;width:16px;height:286px;background:#4a4a4a"></div>
<div class="a" style="left:1390px;top:630px;width:238px;height:27px;background:#6a6a6a"></div>
<div class="a" style="left:1360px;top:656px;width:30px;height:1px;background:#4a4a4a"></div>
<svg class="a" style="left:1367px;top:638px" width="16" height="12"><path d="M1 6C3 2.5 5.5 1 8 1C10.5 1 13 2.5 15 6C13 9.5 10.5 11 8 11C5.5 11 3 9.5 1 6Z" fill="#e4e4e4"/><circle cx="8" cy="6" r="3" fill="#3c3c3c"/><circle cx="8.8" cy="4.9" r="0.9" fill="#ddd"/></svg>
<div class="a" style="left:1394px;top:634px;width:33px;height:20px;background:#2a2a26"></div>
<div class="a" style="left:1395px;top:635px;width:31px;height:19px;background:radial-gradient(circle at 50% 66%,#1e1c18 0px,#2a2620 5px,#5a4c3c 6.5px,#e2a66c 7.5px,#e6b07a 9.5px,#d8b896 11px,#9db0aa 13px,#5c9ca6 16px,#2f8696 22px)"></div>
<div class="t" style="left:1436px;top:638px;color:#f4f4f4">背景</div>
<svg class="a" style="left:1601px;top:636px" width="12" height="15"><path d="M3 6.5V4.5C3 1 9 1 9 4.5V6.5" fill="none" stroke="#e8e8e8" stroke-width="1.2"/><rect x="1.5" y="6.5" width="9" height="7" fill="none" stroke="#e8e8e8" stroke-width="1.3"/><rect x="5.3" y="9.3" width="1.6" height="1.6" fill="#d8ccaa"/></svg>
<!-- footer -->
<div class="a" style="left:1360px;top:916px;width:284px;height:1px;background:#404040"></div>
<svg class="a" style="left:1440px;top:920px" width="180" height="18" viewBox="1440 920 180 18">
<path d="M1447 925H1445.5C1443.5 925 1442.5 926.5 1442.5 928.3C1442.5 930 1443.5 931.5 1445.5 931.5H1447M1451 925H1452.5C1454.5 925 1455.5 926.5 1455.5 928.3C1455.5 930 1454.5 931.5 1452.5 931.5H1451M1445.5 928.3H1452.5" fill="none" stroke="#9a9a9a" stroke-width="1.3"/>
<text x="1471" y="933" font-family="Liberation Serif" font-style="italic" font-size="14" fill="#9a9a9a">fx</text>
<rect x="1496" y="923" width="13" height="10" fill="#dcdcdc"/><circle cx="1502.5" cy="928" r="2.8" fill="#3a3a3a"/>
<circle cx="1530.5" cy="928.5" r="5.3" fill="none" stroke="#dcdcdc" stroke-width="1.2"/>
<path d="M1534.2 924.8A5.3 5.3 0 0 1 1526.8 932.2Z" fill="#dcdcdc"/>
<path d="M1534.5 935H1538.5L1536.5 937Z" fill="#f0f0f0"/>
<path d="M1551 923H1556V924H1563V933H1551Z" fill="#dcdcdc"/>
<path d="M1578.5 924.5H1588.5V934.5H1581.5L1578.5 931.5Z" fill="none" stroke="#f0f0f0" stroke-width="1.3"/>
<path d="M1605.5 924.5H1616.5M1608.5 924.5V922.5H1613.5V924.5M1606.5 925V935H1615.5V925M1609 927V933M1611 927V933M1613 927V933" fill="none" stroke="#a4a49c" stroke-width="1"/>
</svg>

<div class="ln" style="left:1644px;top:78px;width:3px;height:864px"></div>

<!-- right column -->
<div class="a" style="left:1647px;top:78px;width:76px;height:864px;background:#535353"></div>
<!-- collapse arrows -->
<svg class="a" style="left:1630px;top:70px" width="8" height="6"><path d="M0.5 0L3.5 3L0.5 6ZM4.5 0L7.5 3L4.5 6Z" fill="#d4d4d4"/></svg>
<svg class="a" style="left:1710px;top:70px" width="8" height="6"><path d="M3.5 0L0.5 3L3.5 6ZM7.5 0L4.5 3L7.5 6Z" fill="#d4d4d4"/></svg>
<!-- right column boxes -->
<div class="ln" style="left:1647px;top:119px;width:76px;height:1px;background:#3b3b3b"></div>
<div class="ln" style="left:1647px;top:160px;width:76px;height:1px;background:#3b3b3b"></div>
<div class="a" style="left:1675px;top:82px;width:20px;height:4px;background:repeating-linear-gradient(90deg,#3e3e3e 0 1px,transparent 1px 2px)"></div>
<div class="a" style="left:1675px;top:123px;width:20px;height:4px;background:repeating-linear-gradient(90deg,#3e3e3e 0 1px,transparent 1px 2px)"></div>
<svg class="a" style="left:1658px;top:91px" width="18" height="22"><circle cx="8.5" cy="8.3" r="6.3" fill="none" stroke="#dcdcdc" stroke-width="1"/><path d="M6 13.8H11V18.5C11 20 10 21 8.5 21C7 21 6 20 6 18.5Z" fill="#dcdcdc"/></svg>
<div class="t" style="left:1684px;top:95px;color:#f0f0f0">学习</div>
<svg class="a" style="left:1655px;top:134px" width="24" height="19" viewBox="0 0 24 19"><path d="M6.5 17.5C3 17.5 1 15 1 12C1 9 3.5 7 6 7C7 3.5 10 1.5 13.5 1.5C18.5 1.5 22.5 5 22.5 10C22.5 14.5 19 17.5 15 17.5Z" fill="#cfc6b2" stroke="#e6e0d0" stroke-width="1"/><path d="M6 15C4 15 3.5 13.5 3.5 12C3.5 10.5 4.8 9.2 6.5 9.2C9 9.2 11 14.5 14 14.5C16 14.5 17.5 13 17.5 11C17.5 9 16 7.5 14 7.5C12 7.5 10.5 9.5 9.5 10.5" fill="none" stroke="#535353" stroke-width="1.3"/></svg>
<div class="t" style="left:1684px;top:136px;color:#f0f0f0">库</div>

<div class="ln" style="left:1723px;top:32px;width:1px;height:910px"></div>
<div class="ln" style="left:1357px;top:941px;width:367px;height:1px"></div>

<!-- ADJUSTMENTS FLOATING PANEL -->
<div class="a" style="left:1137px;top:56px;width:3px;height:163px;background:linear-gradient(90deg,rgba(0,0,0,0),rgba(0,0,0,0.18))"></div>
<div class="a" style="left:1140px;top:55px;width:212px;height:163px;background:#3a3a3a"></div>
<div class="a" style="left:1141px;top:56px;width:210px;height:12px;background:#424242"></div>
<svg class="a" style="left:1321px;top:60px" width="8" height="6"><path d="M3.5 0L0.5 3L3.5 6ZM7.5 0L4.5 3L7.5 6Z" fill="#d4d4d4"/></svg>
<svg class="a" style="left:1339px;top:59px" width="8" height="8"><path d="M1 1L7 7M7 1L1 7" stroke="#c8c8c8" stroke-width="2"/></svg>
<div class="a" style="left:1141px;top:69px;width:210px;height:27px;background:#424242"></div>
<div class="a" style="left:1141px;top:69px;width:44px;height:28px;background:#535353"></div>
<div class="t" style="left:1150px;top:75px;color:#f0f0f0">调整</div>
<svg class="a" style="left:1335px;top:79px" width="11" height="8"><path d="M0 0H10V1H0ZM0 2H10V3H0ZM0 4H10V5H0ZM0 6H10V7H0Z" fill="#d2d2d2"/></svg>
<div class="a" style="left:1141px;top:97px;width:210px;height:112px;background:#535353"></div>
<div class="t" style="left:1150px;top:104px;color:#e0e0e0">添加调整</div>
<div class="a" style="left:1141px;top:211px;width:210px;height:6px;background:#474747"></div>
<div class="a" style="left:1236px;top:211px;width:20px;height:5px;background:repeating-linear-gradient(90deg,#393939 0 1px,transparent 1px 2px)"></div>
<svg class="a" style="left:1170px;top:120px" width="150" height="80" viewBox="1170 120 150 80">
<defs><linearGradient id="g1"><stop offset="0" stop-color="#222"/><stop offset="0.7" stop-color="#bbb"/><stop offset="1" stop-color="#d8c8a0"/></linearGradient><linearGradient id="g2"><stop offset="0" stop-color="#111"/><stop offset="0.85" stop-color="#ccc"/><stop offset="1" stop-color="#d8ccaa"/></linearGradient><radialGradient id="g3" cx="0.5" cy="0.35" r="0.6"><stop offset="0" stop-color="#3c3c3c"/><stop offset="1" stop-color="#a0a0a0"/></radialGradient></defs>
<g fill="none" stroke="#dcdcdc" stroke-width="1.2">
 <circle cx="1197.5" cy="134.5" r="4.3"/>
 <path d="M1197.5 126V128.5M1197.5 140.5V143M1189 134.5H1191.5M1203.5 134.5H1206M1191.5 128.5L1193 130M1202 139L1203.5 140.5M1191.5 140.5L1193 139M1202 130L1203.5 128.5"/>
</g>
<path d="M1197.5 130.2A4.3 4.3 0 0 1 1197.5 138.8Z" fill="#dcdcdc"/>
<path d="M1213 140V132L1214 134.5L1215 130L1216 135.5L1217.5 129L1219 135L1220 131.5L1221 135.5L1222.5 128.5L1224 135L1225 131L1226.5 135.5L1228 130L1229 135.5L1230 132L1231 132.5V140Z" fill="#dcdcdc"/>
<rect x="1238.5" y="128.5" width="15" height="13" fill="#3e3e3e" stroke="#a0a0a0" stroke-width="1.2"/>
<path d="M1243.5 128.5V141.5M1248.5 128.5V141.5M1238.5 132.8H1253.5M1238.5 137.2H1253.5" stroke="#8a8a8a" stroke-width="1.2"/>
<path d="M1239 141C1246 141 1245.5 129 1253 128.5" stroke="#e0d6bc" stroke-width="1" fill="none"/>
<rect x="1262.5" y="128.5" width="15" height="13" fill="#dcdcdc" stroke="#dcdcdc" stroke-width="1.2"/>
<path d="M1263.5 140.8L1276.8 129.2V140.8Z" fill="#3a3a3a"/>
<path d="M1264.5 132.5H1268.5M1266.5 130.5V134.5" stroke="#3a3a3a" stroke-width="1.2"/>
<path d="M1271 138H1275" stroke="#dcdcdc" stroke-width="1.2"/>
<path d="M1287 129H1301L1294 142.5Z" fill="url(#g3)" stroke="#dcdcdc" stroke-width="1.3"/>
<rect x="1178.5" y="155.5" width="15" height="12" fill="#dcdcdc"/>
<rect x="1180" y="157" width="12" height="4" fill="#2a2a2a"/>
<path d="M1182.5 157V161M1185.5 157V161M1188.5 157V161" stroke="#b0a890" stroke-width="1.2"/>
<rect x="1180" y="162.5" width="12" height="3.5" fill="url(#g1)"/>
<g fill="none" stroke="#dcdcdc" stroke-width="1.1"><path d="M1202 157.5H1218"/><circle cx="1210" cy="157" r="1.5"/><path d="M1205 158L1202.5 164M1205 158L1207.5 164M1215 158L1212.5 164M1215 158L1217.5 164"/></g>
<path d="M1201.5 164H1208.5A3.5 3.5 0 0 1 1201.5 164ZM1211.5 164H1218.5A3.5 3.5 0 0 1 1211.5 164Z" fill="#dcdcdc"/>
<rect x="1226.5" y="155.5" width="15" height="12" fill="#dcdcdc" stroke="#dcdcdc" stroke-width="1"/>
<rect x="1227.5" y="156.5" width="6.5" height="10" fill="#535353"/>
<path d="M1249.5 158H1252L1253.5 156H1258.5L1260 158H1263V166H1249.5Z" fill="#dcdcdc"/>
<circle cx="1256" cy="162" r="2.5" fill="none" stroke="#535353" stroke-width="1.4"/>
<circle cx="1262" cy="166.5" r="3.4" fill="#444" stroke="#dcd4bc" stroke-width="1.2"/>
<circle cx="1281.5" cy="158.5" r="4.5" fill="#9aa09c"/>
<circle cx="1278.5" cy="164.2" r="4.5" fill="#dcdcdc"/>
<circle cx="1284.5" cy="164.2" r="4.5" fill="#c4bcaa"/>
<path d="M1281.5 160.5L1283.3 164.5L1281.5 166.5L1279.7 164.5Z" fill="#555"/>
<rect x="1298.5" y="155.5" width="15" height="13" fill="#dcdcdc"/>
<path d="M1300 157.5H1303M1304 157.5H1307.5M1308.5 157.5H1312M1300 161.5H1303M1304 161.5H1307.5M1308.5 161.5H1312M1300 165.5H1303M1304 165.5H1307.5M1308.5 165.5H1312" stroke="#3a3a3a" stroke-width="2.2"/>
<rect x="1190.5" y="182.5" width="15" height="12" fill="#dcdcdc" stroke="#dcdcdc" stroke-width="1"/>
<path d="M1191.5 183.5H1204.5L1191.5 193.5Z" fill="#535353"/>
<circle cx="1198" cy="188.5" r="3.8" fill="#535353"/>
<path d="M1200.9 186A3.8 3.8 0 0 0 1195.1 191Z" fill="#dcdcdc"/>
<rect x="1214.5" y="182.5" width="15" height="12" fill="#dcdcdc"/>
<path d="M1215 188L1220 183M1215 193.5L1226 183M1219 194L1229 185M1224 194L1229 189.5" stroke="#6f6f6f" stroke-width="2.2"/>
<rect x="1238.5" y="182.5" width="15" height="12" fill="#dcdcdc"/>
<path d="M1240 191L1243 191L1243 189L1246 189L1246 187L1249 187L1249 185L1252 185L1252 187L1250 187L1250 189L1247 189L1247 191L1244 191L1244 193L1240 193Z" fill="#333"/>
<path d="M1245 193L1252 193L1252 191L1249 191Z" fill="#333"/>
<rect x="1262.5" y="182.5" width="15" height="12" fill="#dcdcdc"/>
<path d="M1263.2 183.2L1270 188.5L1263.2 193.8Z" fill="#6a6a6a"/>
<path d="M1276.8 183.2L1270 188.5L1276.8 193.8Z" fill="#555"/>
<path d="M1263.2 193.8L1270 188.5L1276.8 193.8Z" fill="#9aa49e"/>
<rect x="1286.5" y="182.5" width="15" height="12" fill="url(#g2)" stroke="#dcdcdc" stroke-width="1.2"/>
</svg>


</body></html>
